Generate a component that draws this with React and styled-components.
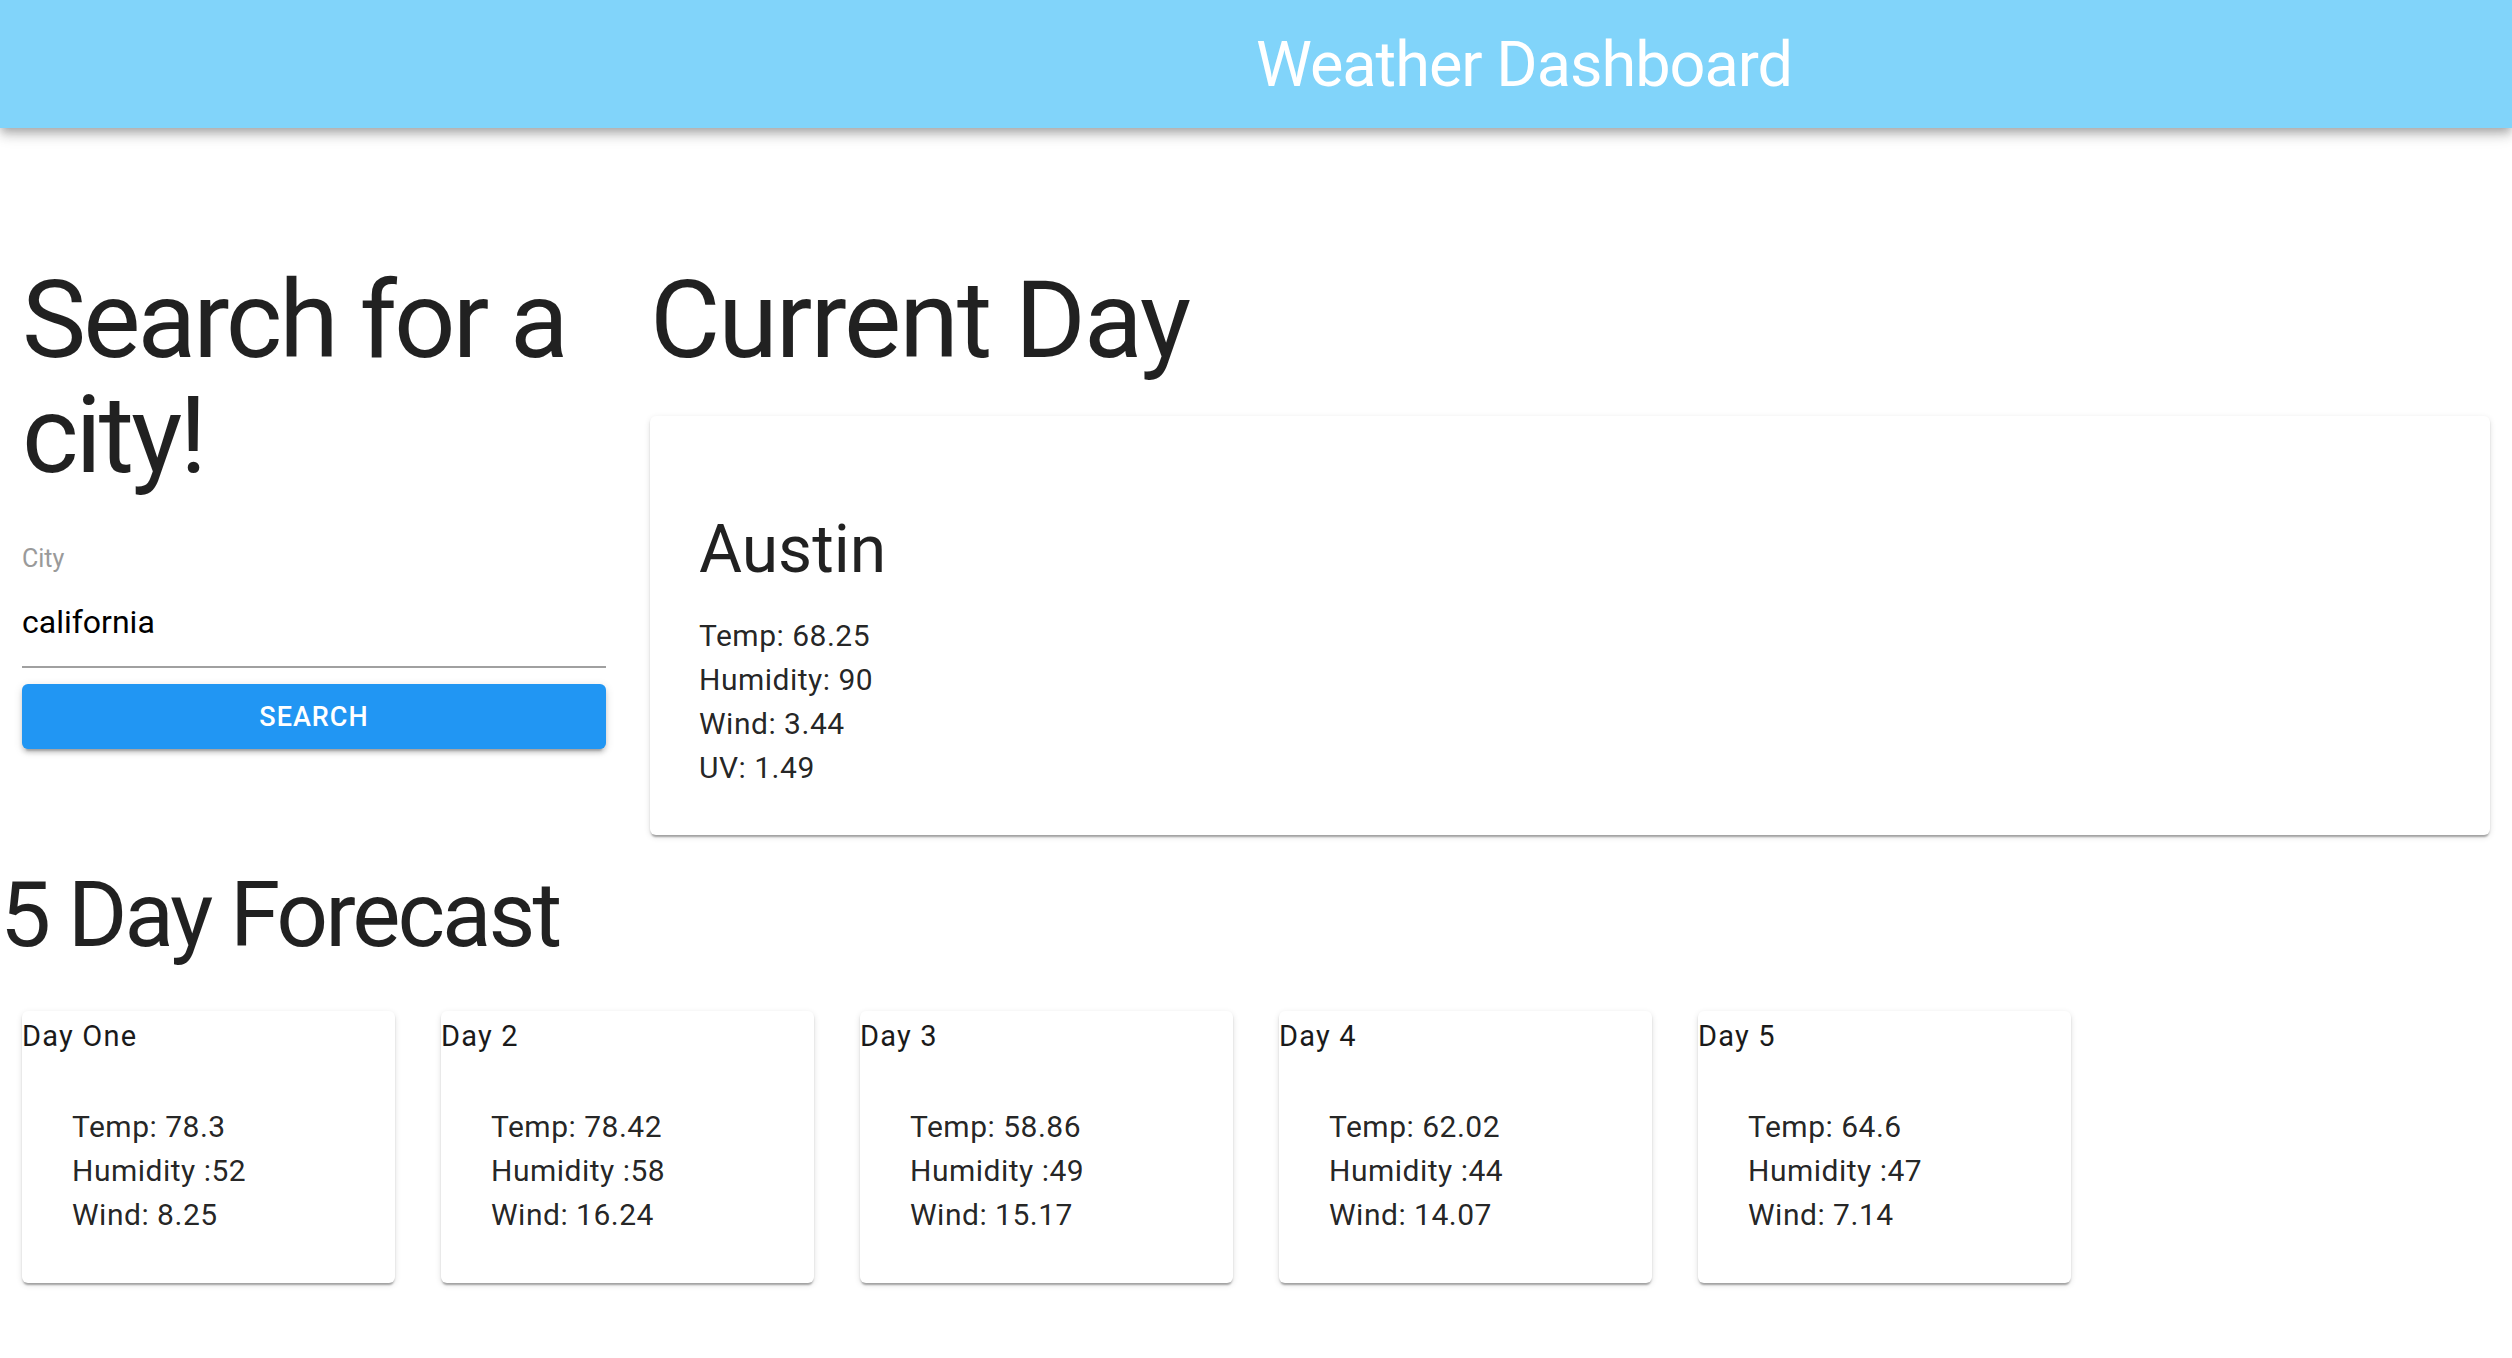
import React from "react";
import styled, { createGlobalStyle } from "styled-components";

const GlobalStyle = createGlobalStyle`
  html, body {
    margin: 0;
    padding: 0;
    background: #ffffff;
    font-family: Roboto, "Liberation Sans", Arial, sans-serif;
    color: rgba(0, 0, 0, 0.87);
  }
  * { box-sizing: border-box; }
`;

const Header = styled.header`
  position: relative;
  z-index: 1;
  height: 128px;
  background: #81d4fa;
  display: flex;
  align-items: center;
  padding-left: 50%;
  box-shadow: 0 4px 8px -2px rgba(0, 0, 0, 0.2), 0 8px 10px 0 rgba(0, 0, 0, 0.14),
    0 2px 20px 0 rgba(0, 0, 0, 0.12);
`;

const Title = styled.h1`
  margin: 0;
  font-size: 63px;
  font-weight: 400;
  line-height: 1;
  letter-spacing: -1px;
  color: #ffffff;
  white-space: nowrap;
`;

const Main = styled.main`
  padding-top: 135px;
  padding-bottom: 40px;
`;

const TopGrid = styled.section`
  display: grid;
  grid-template-columns: 584px 1fr;
  column-gap: 44px;
  padding: 0 22px;
  align-items: start;
`;

const Column = styled.div`
  display: flex;
  flex-direction: column;
`;

const BigHeading = styled.h2`
  margin: 0;
  font-size: 108px;
  font-weight: 400;
  line-height: 115px;
  letter-spacing: ${(p) => p.$tracking}px;
  color: rgba(0, 0, 0, 0.87);
`;

const Field = styled.label`
  display: flex;
  flex-direction: column;
  margin-top: 53px;
`;

const FieldLabel = styled.span`
  font-size: 25px;
  line-height: 25px;
  color: #9a9a9a;
`;

const Input = styled.input`
  display: block;
  width: 100%;
  height: 66px;
  margin-top: 31px;
  padding: 0 0 24px;
  border: 0;
  border-bottom: 2px solid #a0a0a0;
  outline: none;
  background: transparent;
  font-family: Roboto, "Liberation Sans", Arial, sans-serif;
  font-size: 32px;
  line-height: 40px;
  color: #000000;
`;

const SearchButton = styled.button`
  margin-top: 16px;
  width: 100%;
  height: 65px;
  border: 0;
  border-radius: 6px;
  background: #2196f3;
  color: #ffffff;
  font-family: Roboto, "Liberation Sans", Arial, sans-serif;
  font-size: 27px;
  font-weight: 500;
  letter-spacing: 1px;
  text-transform: uppercase;
  cursor: pointer;
  box-shadow: 0 6px 2px -4px rgba(0, 0, 0, 0.2), 0 4px 4px 0 rgba(0, 0, 0, 0.14),
    0 2px 10px 0 rgba(0, 0, 0, 0.12);
`;

const Card = styled.div`
  background: #ffffff;
  border-radius: 6px;
  box-shadow: 0 4px 2px -2px rgba(0, 0, 0, 0.2), 0 2px 2px 0 rgba(0, 0, 0, 0.14),
    0 2px 6px 0 rgba(0, 0, 0, 0.12);
`;

const CurrentCard = styled(Card)`
  margin-top: 38px;
  padding: 95px 49px 45px;
`;

const CityName = styled.h3`
  margin: 0;
  font-size: 66px;
  font-weight: 400;
  line-height: 77px;
  color: rgba(0, 0, 0, 0.87);
`;

const StatList = styled.ul`
  list-style: none;
  margin: ${(p) => p.$top}px 0 0;
  padding: 0 0 0 ${(p) => p.$indent}px;
`;

const Stat = styled.li`
  font-size: 30px;
  line-height: 44px;
  letter-spacing: 0.5px;
  color: rgba(0, 0, 0, 0.87);
  white-space: nowrap;
`;

const ForecastHeading = styled.h2`
  margin: 26px 0 0;
  font-size: 91px;
  font-weight: 400;
  line-height: 109px;
  letter-spacing: -3px;
  color: rgba(0, 0, 0, 0.87);
`;

const ForecastRow = styled.section`
  display: flex;
  gap: 46px;
  margin-top: 41px;
  padding: 0 22px;
`;

const DayCard = styled(Card)`
  width: 373px;
  padding: 5px 0 46px;
`;

const DayLabel = styled.div`
  font-size: 29px;
  line-height: 40px;
  letter-spacing: 1.2px;
  color: #1a1a1a;
`;

const current = {
  city: "Austin",
  stats: ["Temp: 68.25", "Humidity: 90", "Wind: 3.44", "UV: 1.49"],
};

const forecast = [
  { label: "Day One", temp: "78.3", humidity: "52", wind: "8.25" },
  { label: "Day 2", temp: "78.42", humidity: "58", wind: "16.24" },
  { label: "Day 3", temp: "58.86", humidity: "49", wind: "15.17" },
  { label: "Day 4", temp: "62.02", humidity: "44", wind: "14.07" },
  { label: "Day 5", temp: "64.6", humidity: "47", wind: "7.14" },
];

export default function App() {
  return (
    <>
      <GlobalStyle />
      <Header>
        <Title>Weather Dashboard</Title>
      </Header>
      <Main>
        <TopGrid>
          <Column>
            <BigHeading $tracking={-3}>Search for a city!</BigHeading>
            <Field>
              <FieldLabel>City</FieldLabel>
              <Input defaultValue="california" />
            </Field>
            <SearchButton type="button">Search</SearchButton>
          </Column>
          <Column>
            <BigHeading $tracking={-2}>Current Day</BigHeading>
            <CurrentCard>
              <CityName>{current.city}</CityName>
              <StatList $top={26} $indent={0}>
                {current.stats.map((s) => (
                  <Stat key={s}>{s}</Stat>
                ))}
              </StatList>
            </CurrentCard>
          </Column>
        </TopGrid>
        <ForecastHeading>5 Day Forecast</ForecastHeading>
        <ForecastRow>
          {forecast.map((d) => (
            <DayCard key={d.label}>
              <DayLabel>{d.label}</DayLabel>
              <StatList $top={49} $indent={50}>
                <Stat>Temp: {d.temp}</Stat>
                <Stat>Humidity :{d.humidity}</Stat>
                <Stat>Wind: {d.wind}</Stat>
              </StatList>
            </DayCard>
          ))}
        </ForecastRow>
      </Main>
    </>
  );
}
